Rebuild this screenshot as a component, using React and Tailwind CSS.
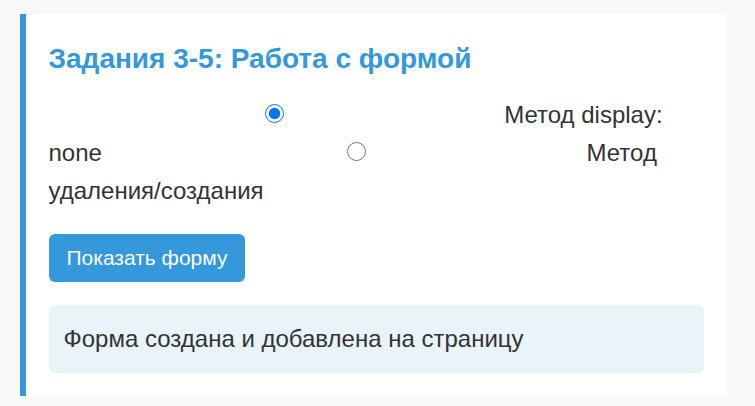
import React, { useState } from 'react';

function App() {
  const [method, setMethod] = useState('display');

  return (
    <div className="min-h-screen w-full bg-[#f9f9f9] pl-[20px] pt-[14px] text-[#333] font-['Liberation_Sans',Arial,sans-serif]">
      <div className="w-[706px] bg-white border-l-[6px] border-[#3498db] pl-[22.5px] pr-[22.5px] pt-[27.5px] pb-[23.4px]">
        <h2 className="text-[28px] leading-[34px] font-bold text-[#3498db]">
          Задания 3-5: Работа с формой
        </h2>

        <div className="mt-[20px] text-[24px] leading-[38.4px]">
          <label>
            <input
              type="radio"
              name="method"
              checked={method === 'display'}
              onChange={() => setMethod('display')}
              className="w-[19px] h-[19px] ml-[216px] mr-[214px] align-baseline"
            /> Метод display: none
          </label>
          <label>
            <input
              type="radio"
              name="method"
              checked={method === 'create'}
              onChange={() => setMethod('create')}
              className="w-[19px] h-[19px] ml-[245px] mr-[214px] align-baseline"
            /> Метод удаления/создания
          </label>
        </div>

        <button className="mt-[23.3px] bg-[#3498db] text-white text-[21px] leading-[24px] px-[18px] py-[12px] rounded-[6px]">
          Показать форму
        </button>

        <div className="mt-[23px] bg-[#e8f4f8] rounded-[6px] px-[15px] py-[20px] text-[24px] leading-[27.6px]">
          Форма создана и добавлена на страницу
        </div>
      </div>
    </div>
  );
}

export default App;
